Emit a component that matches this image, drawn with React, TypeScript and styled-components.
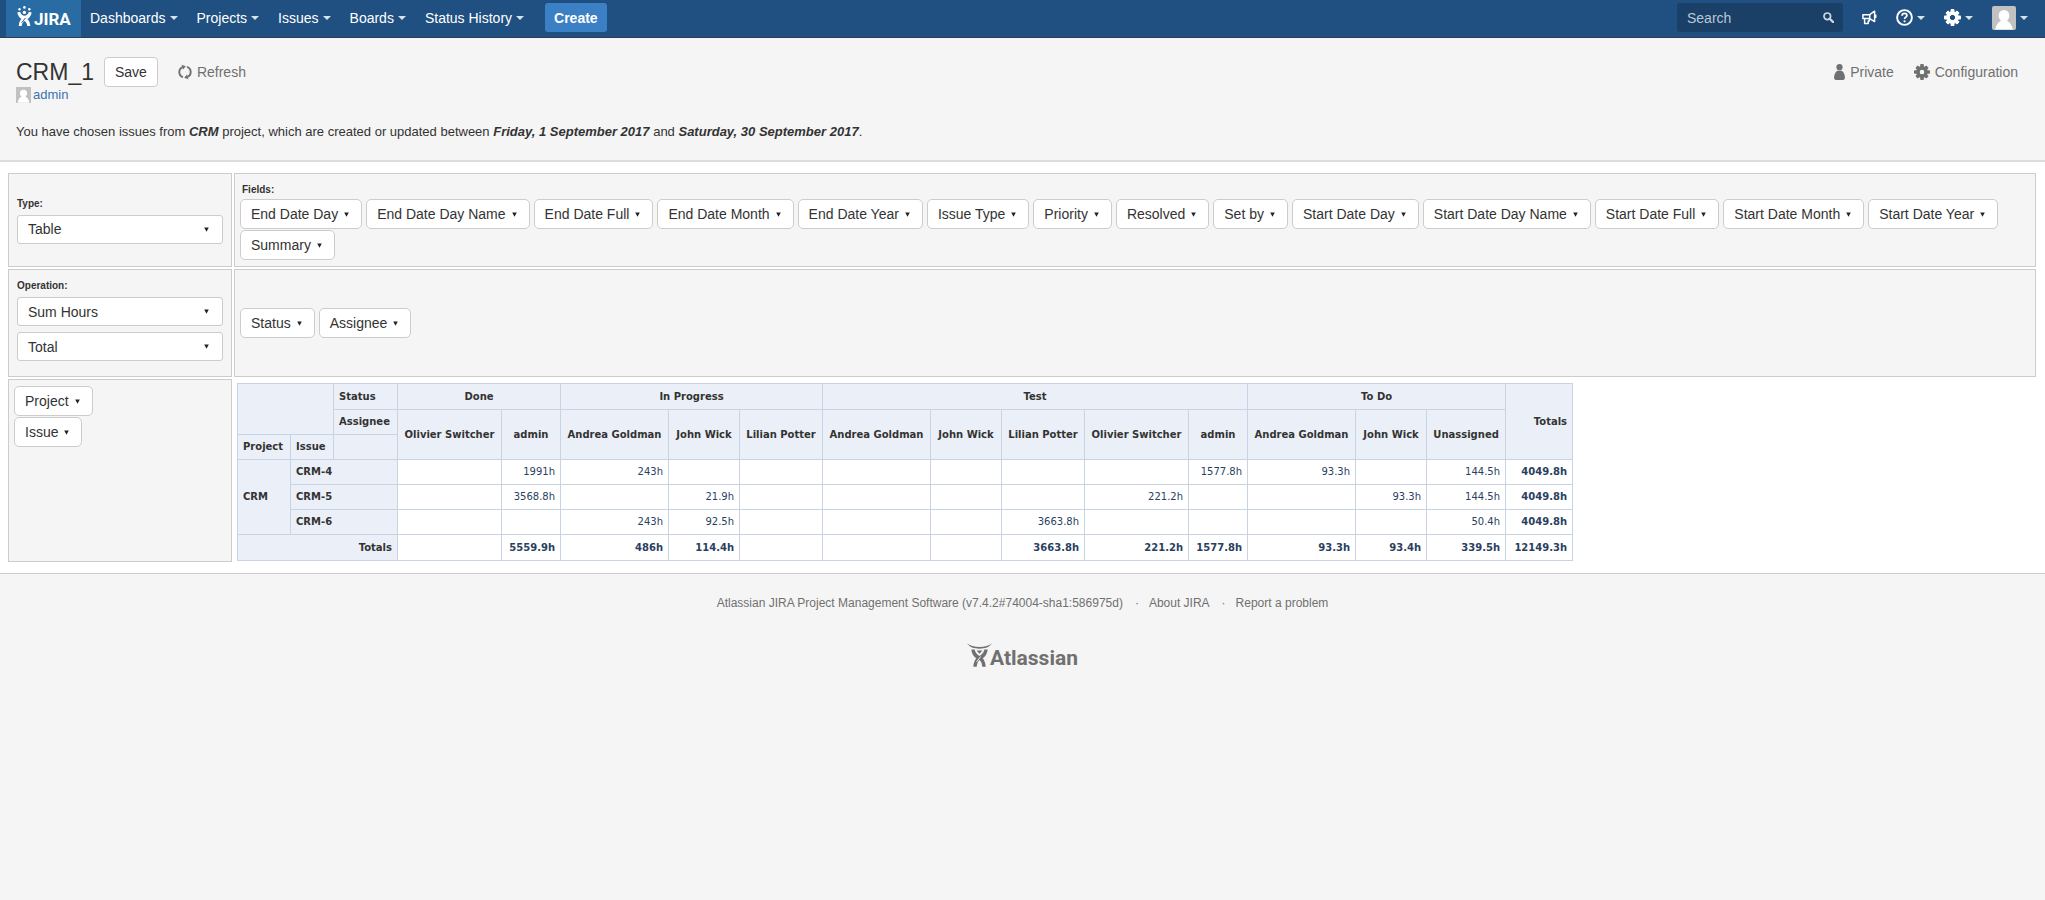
import React from "react";
import styled, { createGlobalStyle, css } from "styled-components";

const color = {
  nav: "#205081",
  navActive: "#296ca3",
  navSearch: "#1a4067",
  create: "#3b7fc4",
  page: "#f5f5f5",
  line: "#cccccc",
  text: "#333333",
  muted: "#707070",
  link: "#3b73af",
  tableLine: "#c8d4e3",
  tableHead: "#ebf0f8",
  tableText: "#2a3f5f",
};

const GlobalStyle = createGlobalStyle`
  * { box-sizing: border-box; }
  body {
    margin: 0;
    background: ${color.page};
    color: ${color.text};
    font: 14px/20px "Liberation Sans", Arial, sans-serif;
  }
  button, input, select { font: inherit; color: inherit; margin: 0; }
  a { color: inherit; text-decoration: none; }
  svg { flex-shrink: 0; }
`;

/* Top navigation */

const NavBar = styled.header`
  display: flex;
  align-items: center;
  height: 38px;
  padding: 0 17px 0 6px;
  background: ${color.nav};
  border-bottom: 1px solid #2e3d54;
  color: #fff;
`;

const Brand = styled.a`
  display: flex;
  align-items: center;
  align-self: stretch;
  gap: 2px;
  width: 75px;
  padding: 0 0 4px 11px;
  background: ${color.navActive};
`;

const BrandName = styled.span`
  padding-top: 4px;
  font: bold 17px/20px "Roboto", sans-serif;
`;

const NavItems = styled.nav`
  display: flex;
  gap: 19px;
  margin: 0 auto 0 9px;
  padding-bottom: 2px;
`;

const NavButton = styled.button`
  display: flex;
  align-items: center;
  gap: 4px;
  padding: 0;
  border: 0;
  background: none;
  cursor: pointer;
`;

const CreateButton = styled.button`
  height: 29px;
  margin-left: 2px;
  padding: 0 9px;
  border: 0;
  border-radius: 3px;
  background: ${color.create};
  font-weight: bold;
`;

const NavEnd = styled.div`
  display: flex;
  align-items: center;
  padding-bottom: 2px;
`;

const SearchBox = styled.label`
  display: flex;
  align-items: center;
  width: 166px;
  height: 29px;
  padding: 0 9px 0 10px;
  border-radius: 3px;
  background: ${color.navSearch};
  color: #ccd9e6;
`;

const SearchInput = styled.input`
  flex: 1;
  min-width: 0;
  padding: 0;
  border: 0;
  outline: 0;
  background: none;
  &::placeholder { color: #b9c7d6; opacity: 1; }
`;

const NavTools = styled.div`
  display: flex;
  align-items: center;
  gap: 19px;
  margin-left: 19px;
`;

/* Report header */

const ReportHeader = styled.section`
  padding: 19px 27px 19px 16px;
  border-bottom: 2px solid #dddddd;
`;

const Row = styled.div`
  display: flex;
  align-items: center;
`;

const Title = styled.h1`
  margin: 0 10px 0 0;
  font-size: 23px;
  line-height: 30px;
  font-weight: normal;
`;

const SaveButton = styled.button`
  height: 30px;
  padding: 0 10px;
  border: 1px solid ${color.line};
  border-radius: 4px;
  background: #fff;
`;

const LinkButton = styled.button`
  display: flex;
  align-items: center;
  gap: 5px;
  margin-left: 20px;
  padding: 0;
  border: 0;
  background: none;
  color: ${color.muted};
`;

const Actions = styled.div`
  display: flex;
  margin-left: auto;
`;

const Owner = styled.a`
  display: inline-flex;
  align-items: center;
  gap: 2px;
  height: 16px;
  color: ${color.link};
  font-size: 13px;
  line-height: 16px;
`;

const Summary = styled.p`
  margin: 20px 0 0;
  font-size: 13px;
  line-height: 18px;
`;

/* Pivot builder */

const Builder = styled.main`
  display: grid;
  grid-template-columns: 224px minmax(0, 1fr);
  gap: 2px;
  padding: 11px 9px 11px 8px;
  background: #fff;
  border-bottom: 1px solid ${color.line};
`;

const Panel = styled.section<{ $top?: boolean; $inset?: number; $height: number }>`
  display: flex;
  flex-direction: column;
  justify-content: ${(p) => (p.$top ? "flex-start" : "center")};
  align-items: stretch;
  min-height: ${(p) => p.$height}px;
  padding: 6px ${(p) => p.$inset ?? 5}px;
  background: ${color.page};
  border: 1px solid ${color.line};
`;

const FieldLabel = styled.label`
  padding-bottom: 4px;
  font-size: 10px;
  line-height: 14px;
  font-weight: bold;
`;

const FieldsCaption = styled.h2`
  margin: 0 0 0 2px;
  padding: 3px 0 2px;
  font-size: 10px;
  line-height: 14px;
  font-weight: bold;
`;

const SelectStack = styled.div`
  display: grid;
  gap: 6px;
  padding-bottom: 6px;
`;

const SelectWrap = styled.div`
  position: relative;
  svg {
    position: absolute;
    right: 14px;
    top: 12px;
    pointer-events: none;
  }
`;

const Select = styled.select`
  display: block;
  appearance: none;
  width: 100%;
  height: 29px;
  padding: 0 10px;
  border: 1px solid ${color.line};
  border-radius: 3px;
  background: #fff;
`;

const Chips = styled.div<{ $column?: boolean }>`
  display: flex;
  flex-wrap: wrap;
  gap: 1px 4px;
  ${(p) =>
    p.$column &&
    css`
      flex-direction: column;
      align-items: flex-start;
    `}
`;

const Chip = styled.button`
  display: flex;
  align-items: center;
  gap: 6px;
  height: 30px;
  padding: 0 12px 0 10px;
  border: 1px solid ${color.line};
  border-radius: 5px;
  background: #fff;
  white-space: nowrap;
  cursor: move;
`;

/* Pivot table */

const TableArea = styled.div`
  padding: 4px 0 0 3px;
  overflow: hidden;
`;

const Pivot = styled.table`
  table-layout: fixed;
  width: 1336px;
  border-collapse: collapse;
  font: 10px/14px "DejaVu Sans", Verdana, sans-serif;
  tr { height: 25px; }
  thead tr:first-child, tfoot tr { height: 26px; }
`;

const cell = css`
  padding: 0 5px;
  border: 1px solid ${color.tableLine};
  white-space: nowrap;
`;

const Head = styled.th<{ $align?: string }>`
  ${cell}
  background: ${color.tableHead};
  color: ${color.text};
  text-align: ${(p) => p.$align ?? "left"};
`;

const Value = styled.td<{ $total?: boolean }>`
  ${cell}
  background: #fff;
  color: ${color.tableText};
  text-align: right;
  font-weight: ${(p) => (p.$total ? "bold" : "normal")};
`;

/* Footer */

const Footer = styled.footer`
  display: flex;
  flex-direction: column;
  align-items: center;
  gap: 31px;
  padding-top: 20px;
  color: ${color.muted};
`;

const FooterLinks = styled.ul`
  display: flex;
  margin: 0;
  padding: 0;
  list-style: none;
  font-size: 12px;
  line-height: 18px;
  li + li::before { content: "·"; padding: 0 10px 0 12px; }
`;

const AtlassianLogo = styled.a`
  display: flex;
  align-items: flex-end;
`;

const AtlassianName = styled.span`
  margin-left: -2px;
  font: bold 21px/18px "Roboto", sans-serif;
`;

/* Icons */

const Caret = () => (
  <svg width="8" height="4" viewBox="0 0 8 4" aria-hidden="true">
    <path d="M0 0h8L4 4z" fill="#d9e3ee" />
  </svg>
);

const Arrow = () => (
  <svg width="5" height="5" viewBox="0 0 5 5" aria-hidden="true">
    <path d="M.2.4h4.600L2.500 4.800z" fill="#222" />
  </svg>
);

const Gear = ({ size }: { size: number }) => (
  <svg width={size} height={size} viewBox="0 0 16 16" aria-hidden="true">
    <g fill="currentColor">
      {[0, 45, 90, 135].map((angle) => (
        <rect key={angle} x="6.2" y="0" width="3.6" height="16" rx="0.8" transform={`rotate(${angle} 8 8)`} mask="url(#gear-hole)" />
      ))}
    </g>
    <circle cx="8" cy="8" r="4.2" fill="none" stroke="currentColor" strokeWidth="3.4" />
    <mask id="gear-hole" maskUnits="userSpaceOnUse" x="0" y="0" width="16" height="16">
      <rect width="16" height="16" fill="#fff" />
      <circle cx="8" cy="8" r="2.6" fill="#000" />
    </mask>
  </svg>
);

const Avatar = ({ width, height }: { width: number; height: number }) => (
  <svg width={width} height={height} viewBox="0 0 24 24" preserveAspectRatio="xMidYMid slice" aria-hidden="true">
    <rect width="24" height="24" rx="2" fill="#c1c1c1" />
    <path d="M12 4a5.3 5.3 0 0 1 5.300 5.500c0 2.400-1 4.200-2.300 5.200 2.800 1.200 5 4.300 5.800 8.800H3.200c.8-4.500 3-7.600 5.800-8.800-1.300-1-2.300-2.800-2.300-5.200A5.300 5.300 0 0 1 12 4z" fill="#fff" />
  </svg>
);

const SearchIcon = () => (
  <svg width="11" height="11" viewBox="0 0 11 11" fill="none" stroke="currentColor" aria-hidden="true">
    <circle cx="4.300" cy="4.300" r="3.300" strokeWidth="1.700" />
    <path d="M6.800 6.800l3.300 3.300" strokeWidth="2.200" strokeLinecap="round" />
  </svg>
);

const Megaphone = () => (
  <svg width="15" height="15" viewBox="0 0 15 15" fill="none" stroke="#fff" strokeWidth="1.500" strokeLinejoin="round" aria-hidden="true">
    <path d="M.9 4.700h6.800L12.600 1.200v10.400L7.700 8.600H.9z" />
    <path d="M7.700 4.700v3.900M2.600 8.600v5h3.600v-2.500h1.200V8.600M13.700 4.600v3.400" />
  </svg>
);

const Help = () => (
  <svg width="17" height="17" viewBox="0 0 17 17" fill="none" stroke="#fff" aria-hidden="true">
    <circle cx="8.500" cy="8.500" r="7.400" strokeWidth="1.900" />
    <path d="M6.100 6.700c0-1.500 1-2.300 2.400-2.300s2.400.8 2.400 2.100c0 1.600-2.300 1.700-2.300 3.500" strokeWidth="1.800" />
    <circle cx="8.600" cy="12.300" r="1.100" fill="#fff" stroke="none" />
  </svg>
);

const RefreshIcon = () => (
  <svg width="14" height="16" viewBox="0 0 14 16" aria-hidden="true">
    <g fill="none" stroke="currentColor" strokeWidth="1.900">
      <path d="M5 13.200A5.400 5.400 0 0 1 4.600 3.100" />
      <path d="M9 2.800a5.400 5.400 0 0 1 .4 10.100" />
    </g>
    <path d="M3.600.8l4.200 1.400-2.800 3.200zM10.400 15.200l-4.200-1.400 2.800-3.200z" fill="currentColor" />
  </svg>
);

const Person = () => (
  <svg width="11" height="16" viewBox="0 0 11 16" fill="currentColor" aria-hidden="true">
    <circle cx="5.500" cy="3.200" r="3.100" />
    <path d="M3.300 6.800h4.400c2.200 1.500 3.200 4 3.200 7 0 1.300-.6 2.100-1.900 2.100H2C.7 15.900.1 15.100.1 13.800c0-3 1-5.500 3.200-7z" />
  </svg>
);

const JiraMark = () => (
  <svg width="15" height="21" viewBox="0 0 15 21" fill="#fff" aria-hidden="true">
    <circle cx="2.500" cy="3.200" r="1.200" />
    <circle cx="7.400" cy="1.400" r="1.300" />
    <circle cx="12.300" cy="3.200" r="1.200" />
    <circle cx="7.400" cy="6.400" r="1.700" />
    <path d="M.3 6.500l2.800-.7C4.200 8.900 5.700 9.700 7.500 9.700s3.300-.8 4.400-3.900l2.800.7c-.7 3.500-2.200 5.200-4.200 6.500 1.600 1.300 2.500 3.700 2.800 7h-3c-.3-2.600-1.200-4.300-2.800-5.100-1.600.8-2.500 2.500-2.800 5.100h-3c.3-3.300 1.200-5.700 2.800-7C2.500 11.700 1 10 .3 6.500z" />
    <path d="M8.600 11.800l-4 5" stroke={color.navActive} strokeWidth="1" />
  </svg>
);

const AtlassianMark = () => (
  <svg width="25" height="24" viewBox="0 0 25 24" fill={color.muted} aria-hidden="true">
    <path d="M0 .3c3 2.500 7.300 3.700 12.500 3.700S22 2.800 25 .3c-2.600 3.800-7 5.400-12.500 5.400S2.600 4.100 0 .3z" />
    <path d="M9.600 7.400h5.800l-2.900 3.400z" />
    <path d="M4.300 6.500h3.300c.6 3 2.300 4.900 4.900 6.500 2.600-1.600 4.300-3.500 4.900-6.500h3.300c-.4 4-2.300 6.800-4.900 8.800 1.700 2.300 2.700 5.200 2.900 8.500h-3.400c-.2-3-1.100-5-2.800-6.700-1.700 1.700-2.600 3.700-2.800 6.700H6.300c.2-3.300 1.200-6.200 2.900-8.500-2.600-2-4.500-4.800-4.900-8.800z" />
    <path d="M13.600 13.600l-4 5.200" stroke={color.page} strokeWidth="1" />
  </svg>
);

/* Data */

const menus = ["Dashboards", "Projects", "Issues", "Boards", "Status History"];

const fields = [
  "End Date Day", "End Date Day Name", "End Date Full", "End Date Month", "End Date Year",
  "Issue Type", "Priority", "Resolved", "Set by", "Start Date Day", "Start Date Day Name",
  "Start Date Full", "Start Date Month", "Start Date Year", "Summary",
];

const groups = [
  { status: "Done", people: ["Olivier Switcher", "admin"] },
  { status: "In Progress", people: ["Andrea Goldman", "John Wick", "Lilian Potter"] },
  { status: "Test", people: ["Andrea Goldman", "John Wick", "Lilian Potter", "Olivier Switcher", "admin"] },
  { status: "To Do", people: ["Andrea Goldman", "John Wick", "Unassigned"] },
];

const columnWidths = [53, 43, 64, 104, 59, 108, 71, 83, 108, 71, 83, 104, 59, 108, 71, 79, 67];

const issues = [
  { key: "CRM-4", values: ["", "1991h", "243h", "", "", "", "", "", "", "1577.8h", "93.3h", "", "144.5h"], total: "4049.8h" },
  { key: "CRM-5", values: ["", "3568.8h", "", "21.9h", "", "", "", "", "221.2h", "", "", "93.3h", "144.5h"], total: "4049.8h" },
  { key: "CRM-6", values: ["", "", "243h", "92.5h", "", "", "", "3663.8h", "", "", "", "", "50.4h"], total: "4049.8h" },
];

const totals = ["", "5559.9h", "486h", "114.4h", "", "", "", "3663.8h", "221.2h", "1577.8h", "93.3h", "93.4h", "339.5h", "12149.3h"];

const ChipList = ({ names, column }: { names: string[]; column?: boolean }) => (
  <Chips $column={column}>
    {names.map((name) => (
      <Chip key={name} type="button">
        {name}
        <Arrow />
      </Chip>
    ))}
  </Chips>
);

const Dropdown = ({ id, label, option }: { id: string; label?: string; option: string }) => (
  <SelectWrap>
    <Select id={id} aria-label={label}>
      <option>{option}</option>
    </Select>
    <Arrow />
  </SelectWrap>
);

const PivotTable = () => (
  <Pivot>
    <colgroup>
      {columnWidths.map((width, i) => (
        <col key={i} width={width} />
      ))}
    </colgroup>
    <thead>
      <tr>
        <Head colSpan={2} rowSpan={2} />
        <Head>Status</Head>
        {groups.map((g) => (
          <Head key={g.status} colSpan={g.people.length} $align="center">{g.status}</Head>
        ))}
        <Head rowSpan={3} $align="right">Totals</Head>
      </tr>
      <tr>
        <Head>Assignee</Head>
        {groups.flatMap((g) =>
          g.people.map((person) => (
            <Head key={g.status + person} rowSpan={2} $align="center">{person}</Head>
          ))
        )}
      </tr>
      <tr>
        <Head>Project</Head>
        <Head>Issue</Head>
        <Head />
      </tr>
    </thead>
    <tbody>
      {issues.map((issue, row) => (
        <tr key={issue.key}>
          {row === 0 && <Head rowSpan={issues.length}>CRM</Head>}
          <Head colSpan={2}>{issue.key}</Head>
          {issue.values.map((value, i) => (
            <Value key={i}>{value}</Value>
          ))}
          <Value $total>{issue.total}</Value>
        </tr>
      ))}
    </tbody>
    <tfoot>
      <tr>
        <Head colSpan={3} $align="right">Totals</Head>
        {totals.map((value, i) => (
          <Value key={i} $total>{value}</Value>
        ))}
      </tr>
    </tfoot>
  </Pivot>
);

export default function App() {
  return (
    <>
      <GlobalStyle />
      <NavBar>
        <Brand href="#">
          <JiraMark />
          <BrandName>JIRA</BrandName>
        </Brand>
        <NavItems>
          {menus.map((menu) => (
            <NavButton key={menu} type="button">
              {menu}
              <Caret />
            </NavButton>
          ))}
          <CreateButton type="button">Create</CreateButton>
        </NavItems>
        <NavEnd>
          <SearchBox>
            <SearchInput type="text" placeholder="Search" aria-label="Search" />
            <SearchIcon />
          </SearchBox>
          <NavTools>
            <NavButton type="button" aria-label="Feedback"><Megaphone /></NavButton>
            <NavButton type="button" aria-label="Help"><Help /><Caret /></NavButton>
            <NavButton type="button" aria-label="Administration"><Gear size={17} /><Caret /></NavButton>
            <NavButton type="button" aria-label="Profile"><Avatar width={24} height={24} /><Caret /></NavButton>
          </NavTools>
        </NavEnd>
      </NavBar>

      <ReportHeader>
        <Row>
          <Title>CRM_1</Title>
          <SaveButton type="button">Save</SaveButton>
          <LinkButton type="button"><RefreshIcon />Refresh</LinkButton>
          <Actions>
            <LinkButton type="button"><Person />Private</LinkButton>
            <LinkButton type="button"><Gear size={16} />Configuration</LinkButton>
          </Actions>
        </Row>
        <Row>
          <Owner href="#"><Avatar width={15} height={16} />admin</Owner>
        </Row>
        <Summary>
          You have chosen issues from <b><i>CRM</i></b> project, which are created or updated between{" "}
          <b><i>Friday, 1 September 2017</i></b> and <b><i>Saturday, 30 September 2017</i></b>.
        </Summary>
      </ReportHeader>

      <Builder>
        <Panel $height={94} $inset={8}>
          <FieldLabel htmlFor="type">Type:</FieldLabel>
          <Dropdown id="type" option="Table" />
        </Panel>
        <Panel $height={94}>
          <FieldsCaption>Fields:</FieldsCaption>
          <ChipList names={fields} />
        </Panel>
        <Panel $height={108} $inset={8}>
          <FieldLabel htmlFor="operation">Operation:</FieldLabel>
          <SelectStack>
            <Dropdown id="operation" option="Sum Hours" />
            <Dropdown id="aggregate" label="Aggregate" option="Total" />
          </SelectStack>
        </Panel>
        <Panel $height={108}>
          <ChipList names={["Status", "Assignee"]} />
        </Panel>
        <Panel $height={183} $top>
          <ChipList names={["Project", "Issue"]} column />
        </Panel>
        <TableArea>
          <PivotTable />
        </TableArea>
      </Builder>

      <Footer>
        <FooterLinks>
          <li>Atlassian JIRA Project Management Software (v7.4.2#74004-sha1:586975d)</li>
          <li><a href="#">About JIRA</a></li>
          <li><a href="#">Report a problem</a></li>
        </FooterLinks>
        <AtlassianLogo href="#">
          <AtlassianMark />
          <AtlassianName>Atlassian</AtlassianName>
        </AtlassianLogo>
      </Footer>
    </>
  );
}
